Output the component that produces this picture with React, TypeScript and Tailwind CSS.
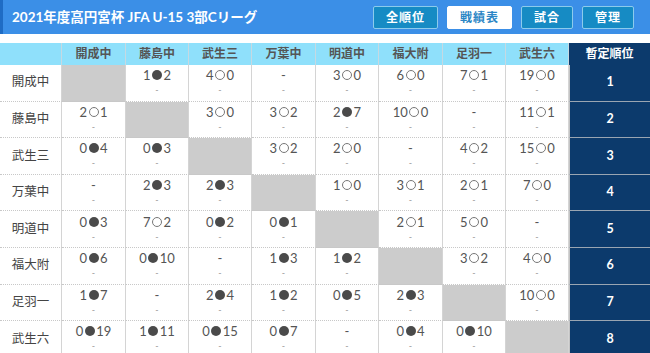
const TEAMS = ["開成中", "藤島中", "武生三", "万葉中", "明道中", "福大附", "足羽一", "武生六"];

// "X" marks the team's own cell, "-" is a match not yet played
const RESULTS: string[][] = [
  ["X", "1●2", "4○0", "-", "3○0", "6○0", "7○1", "19○0"],
  ["2○1", "X", "3○0", "3○2", "2●7", "10○0", "-", "11○1"],
  ["0●4", "0●3", "X", "3○2", "2○0", "-", "4○2", "15○0"],
  ["-", "2●3", "2●3", "X", "1○0", "3○1", "2○1", "7○0"],
  ["0●3", "7○2", "0●2", "0●1", "X", "2○1", "5○0", "-"],
  ["0●6", "0●10", "-", "1●3", "1●2", "X", "3○2", "4○0"],
  ["1●7", "-", "2●4", "1●2", "0●5", "2●3", "X", "10○0"],
  ["0●19", "1●11", "0●15", "0●7", "-", "0●4", "0●10", "X"],
];

const FONT = { fontFamily: "Lato, 'Noto Sans CJK JP', sans-serif" };

function Score({ value }: { value: string }) {
  if (value === "-") return <span>-</span>;
  const win = value.includes("○");
  const [a, b] = value.split(win ? "○" : "●");
  return (
    <span className="inline-flex items-center">
      {a}
      <span
        className={
          "mx-[1.5px] inline-block h-[10px] w-[10px] rounded-full " +
          (win ? "border border-[#777]" : "bg-[#4a4a4a]")
        }
      />
      {b}
    </span>
  );
}

function Button({ label, active }: { label: string; active?: boolean }) {
  return (
    <button
      className={
        "h-[23px] rounded-[2px] border px-[12px] text-[12px] font-bold tracking-[1px] " +
        (active
          ? "border-white bg-white text-[#2b86c5]"
          : "border-[#8ccbec] bg-[#168bc4] text-white")
      }
    >
      {label}
    </button>
  );
}

export default function App() {
  return (
    <div className="h-[353px] w-[650px] overflow-hidden bg-white" style={FONT}>
      <div className="flex h-[34px] items-center justify-between border-l-[3px] border-[#1f6cc4] bg-[#3b8fe7] pl-[9px] pr-[16px]">
        <h1 className="text-[13.5px] font-bold text-white">2021年度高円宮杯 JFA U-15 3部Cリーグ</h1>
        <div className="flex gap-[9px] pt-[1px]">
          <Button label="全順位" />
          <Button label="戦績表" active />
          <Button label="試合" />
          <Button label="管理" />
        </div>
      </div>

      <div className="mt-[9px] grid grid-cols-[62px_64px_63px_63px_64px_63px_64px_63px_63px_81px]">
        <div className="h-[22px] border-r border-[#c6d9e2] bg-[#8fe0fb]" />
        {TEAMS.map((t) => (
          <div
            key={t}
            className="flex h-[22px] items-center justify-center border-r border-[#c6d9e2] bg-[#8fe0fb] text-[12px] font-bold text-[#555]"
          >
            {t}
          </div>
        ))}
        <div className="flex h-[22px] items-center justify-center bg-[#0c3a6c] text-[12px] font-bold text-white">
          暫定順位
        </div>

        {TEAMS.map((team, r) => (
          <div key={team} className="contents">
            <div className="flex h-[36.6px] items-center justify-center border-b border-r border-b-[#c8c8c8] border-r-[#d4d4d4] border-dotted text-[12.5px] text-[#444] [border-right-style:solid]">
              {team}
            </div>
            {RESULTS[r].map((v, c) =>
              v === "X" ? (
                <div key={c} className="h-[36.6px] border-b border-r border-b-[#c8c8c8] border-r-[#d4d4d4] bg-[#cccccc]" />
              ) : (
                <div
                  key={c}
                  className="flex h-[36.6px] flex-col items-center justify-center border-b border-r border-b-[#c8c8c8] border-r-[#d4d4d4] border-dotted text-[13px] leading-[14px] text-[#555] [border-right-style:solid]"
                >
                  <Score value={v} />
                  <span className="mt-[1px] text-[9px] text-[#999]">-</span>
                </div>
              ),
            )}
            <div className="flex h-[36.6px] items-center justify-center border-b border-l border-b-[#9aa5b2] border-l-[#c4c4c4] bg-[#0c3a6c] text-[12.5px] font-bold text-white">
              {r + 1}
            </div>
          </div>
        ))}
      </div>
    </div>
  );
}
